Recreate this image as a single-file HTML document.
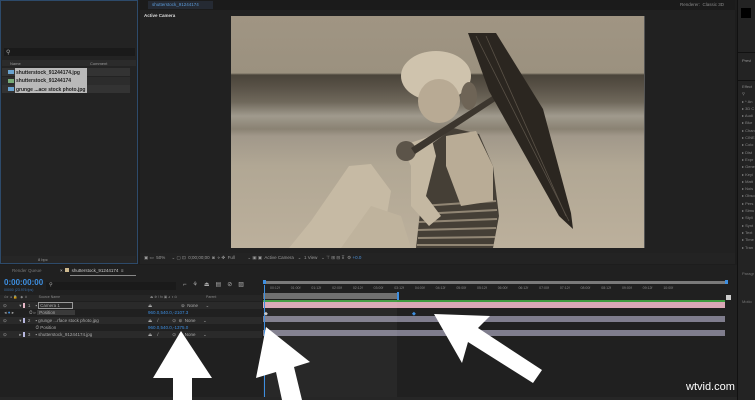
<!DOCTYPE html>
<html><head><meta charset="utf-8"><style>
*{margin:0;padding:0;box-sizing:border-box}
body{width:755px;height:400px;overflow:hidden;background:#1d1d1d;font-family:"Liberation Sans",sans-serif;font-size:5px;color:#9a9a9a;position:relative}
.a{position:absolute}
</style></head><body>
<!-- project panel -->
<div class="a" style="left:0;top:0;width:138px;height:264px;background:#232323;border:1px solid #2d4a6a"></div>
<div class="a" style="left:4px;top:48px;width:131px;height:8px;background:#1a1a1a"></div>
<div class="a" style="left:6px;top:49px;color:#aaa;font-size:6px">⚲</div>
<div class="a" style="left:2px;top:60px;width:134px;height:6px;background:#2b2b2b"></div>
<div class="a" style="left:10px;top:61px;font-size:4px">Name</div>
<div class="a" style="left:90px;top:61px;font-size:4px">Comment</div>
<div class="a" style="left:2px;top:68px;width:128px;height:8px;background:#333"></div>
<div class="a" style="left:2px;top:77px;width:128px;height:8px;background:#2c2c2c"></div>
<div class="a" style="left:2px;top:85px;width:128px;height:8px;background:#333"></div>
<div class="a" style="left:15px;top:68px;width:72px;height:25px;background:#b9b9b9"></div>
<div class="a" style="left:16px;top:69px;color:#222;font-size:5px;font-weight:bold;line-height:8.3px">shutterstock_91244174.jpg<br>shutterstock_91244174<br>grunge ...ace stock photo.jpg</div>
<div class="a" style="left:8px;top:70px;width:6px;height:4px;background:#6aa3d0"></div>
<div class="a" style="left:8px;top:79px;width:6px;height:4px;background:#7a7"></div>
<div class="a" style="left:8px;top:87px;width:6px;height:4px;background:#6aa3d0"></div>
<div class="a" style="left:2px;top:256px;width:134px;height:7px;background:#262626"></div>
<div class="a" style="left:38px;top:257px;font-size:4px">8 bpc</div>
<!-- comp panel -->
<div class="a" style="left:140px;top:0;width:595px;height:264px;background:#212121"></div>
<div class="a" style="left:140px;top:0;width:595px;height:10px;background:#1b1b1b"></div>
<div class="a" style="left:148px;top:1px;width:65px;height:8px;background:#252a33;color:#5b9ad8;font-size:4.5px;padding:1px 4px">shutterstock_91244174</div>
<div class="a" style="left:680px;top:2px;font-size:4.5px;color:#888">Renderer:&nbsp; Classic 3D</div>
<div class="a" style="left:144px;top:13px;font-size:4.5px;color:#ddd;font-weight:bold">Active Camera</div>
<!-- photo -->
<div class="a" style="left:231px;top:16px;width:413px;height:232px;overflow:hidden;background:linear-gradient(#a09583 0,#9b917f 57px,#4a443a 59px,#5a5348 72px,#6f685b 86px,#a09a8d 100px,#8a8273 113px,#a1988a 120px,#b1a794 150px,#bcb09c 232px)">
<svg width="413" height="232" style="position:absolute;left:0;top:0">
<!-- legs -->
<path d="M58 232 L80 205 L118 150 L140 148 L160 175 L150 232Z" fill="#c6baa4"/>
<path d="M110 232 L140 190 L170 200 L180 232Z" fill="#bfb39d"/>
<!-- swimsuit -->
<path d="M185 232 L192 170 L198 130 L222 112 L248 118 L262 150 L268 200 L262 232Z" fill="#453f36"/>
<g stroke="#a59884" stroke-width="2" opacity=".8">
<line x1="190" y1="190" x2="265" y2="185"/><line x1="189" y1="198" x2="266" y2="194"/><line x1="188" y1="206" x2="266" y2="203"/><line x1="187" y1="214" x2="265" y2="212"/><line x1="187" y1="222" x2="264" y2="221"/><line x1="186" y1="229" x2="263" y2="229"/>
</g>
<!-- torso/back skin -->
<path d="M215 120 L245 115 L262 150 L262 185 L230 190 L215 150Z" fill="#b9ac96"/>
<!-- arm -->
<path d="M170 130 L200 120 L205 140 L195 180 L210 200 L198 210 L180 190 L180 150Z" fill="#c4b8a2"/>
<circle cx="175" cy="135" r="10" fill="#5c5449"/>
<!-- umbrella handle -->
<path d="M180 132 L274 72 L278 76 L184 138Z" fill="#3c362e"/>
<!-- umbrella -->
<path d="M237 17 L265 17 L312 93 L340 197 L342 213 L328 200 L286 125 L258 75Z" fill="#2b2620"/>
<g stroke="#5a5247" stroke-width="0.8"><line x1="245" y1="20" x2="338" y2="205"/><line x1="255" y1="20" x2="335" y2="200"/></g>
<!-- head -->
<ellipse cx="205" cy="60" rx="35" ry="25" fill="#cfc3ad"/>
<ellipse cx="208" cy="85" rx="21" ry="22" fill="#b8aa94"/>
<ellipse cx="238" cy="80" rx="8" ry="14" fill="#6e6456"/>
</svg></div>
<div class="a" style="left:644px;top:16px;width:1px;height:232px;background:#555"></div>
<!-- comp toolbar -->
<div class="a" style="left:140px;top:253px;width:595px;height:11px;background:#232323"></div>
<div class="a" style="left:144px;top:255px;font-size:4.5px;color:#999;white-space:pre">▣ ▭  50%     ⌄ ▢ ⊡  0;00;00;00  ◙  ⋄ ✤  Full          ⌄ ▣ ▣  Active Camera   ⌄  1 View   ⌄ ⊤ ⊞ ⊟ ⊼  ⚙ <span style="color:#4a8fd8">+0.0</span></div>
<!-- right panel -->
<div class="a" style="left:737px;top:0;width:18px;height:400px;background:#232323;border-left:1px solid #111"></div>
<div class="a" style="left:741px;top:8px;width:10px;height:10px;background:#000"></div>
<div class="a" style="left:737px;top:52px;width:18px;height:1px;background:#111"></div>
<div class="a" style="left:742px;top:58px;font-size:4px">Previ</div>
<div class="a" style="left:737px;top:80px;width:18px;height:1px;background:#111"></div>
<div class="a" style="left:742px;top:83px;font-size:4px;line-height:7.3px;color:#888">Effect<br>⚲<br>▸ * An<br>▸ 3D C<br>▸ Audi<br>▸ Blur<br>▸ Chan<br>▸ CINE<br>▸ Colo<br>▸ Dist<br>▸ Expr<br>▸ Gene<br>▸ Keyi<br>▸ Matt<br>▸ Nois<br>▸ Obso<br>▸ Pers<br>▸ Simu<br>▸ Styli<br>▸ Synt<br>▸ Text<br>▸ Time<br>▸ Tran</div>
<div class="a" style="left:742px;top:270px;font-size:4px;line-height:7px;color:#777">Paragr<br><br><br><br>Motio</div>
<!-- timeline -->
<div class="a" style="left:0;top:265px;width:737px;height:135px;background:#202020"></div>
<div class="a" style="left:12px;top:268px;font-size:4.5px;color:#777">Render Queue</div>
<div class="a" style="left:60px;top:268px;font-size:4.5px;color:#ccc">×&nbsp; <span style="display:inline-block;width:4px;height:4px;background:#cdb98f"></span>&nbsp; shutterstock_91244174 &nbsp;≡</div>
<div class="a" style="left:70px;top:275px;width:66px;height:1px;background:#888"></div>
<div class="a" style="left:4px;top:278px;font-size:8px;color:#3d8ee0;font-weight:bold">0:00:00:00</div>
<div class="a" style="left:4px;top:288px;font-size:3.5px;color:#3b6ea8">00000 (23.976 fps)</div>
<div class="a" style="left:46px;top:282px;width:130px;height:8px;background:#1a1a1a;color:#aaa;font-size:5px;padding-left:3px">⚲</div>
<div class="a" style="left:183px;top:281px;font-size:6px;color:#aaa;letter-spacing:6px">⌐⚘⏏▤⊘▨</div>
<div class="a" style="left:0;top:295px;width:262px;height:6px;background:#262626;font-size:3.5px;padding-left:4px;color:#888">⊙◐ ● 🔒 &nbsp; ◆ &nbsp;# &nbsp;&nbsp;&nbsp;&nbsp;&nbsp;&nbsp;&nbsp;&nbsp;&nbsp;&nbsp; Source Name<span style="position:absolute;left:150px">⏏ ✲ \ fx ▣ ◕ ◑ ⊙</span><span style="position:absolute;left:206px">Parent</span></div>
<div class="a" style="left:0;top:302px;width:262px;height:7px;background:#2a2a2a"></div>
<div class="a" style="left:0;top:317px;width:262px;height:7px;background:#2a2a2a"></div>
<div class="a" style="left:0;top:331px;width:262px;height:7px;background:#2a2a2a"></div>
<div class="a" style="left:3px;top:302px;font-size:4.5px;line-height:7.3px;color:#aaa;white-space:pre">⊙          ▾ <span style="background:#e8b8c8">  </span>  1    ▪ <span style="border:1px solid #999;padding:0 12px 0 1px">Camera 1</span>
 ◂ <span style="color:#3d8ee0">●</span> ▸            ⏱ ▹ <span style="background:#3a3a3a;padding:0 20px 0 2px">Position</span>
⊙          ▾ <span style="background:#b8b8e0">  </span>  2    ▪ grunge ...rface stock photo.jpg
                          ⏱ Position
⊙          ▸ <span style="background:#b8b8e0">  </span>  3    ▪ shutterstock_91244174.jpg</div>
<div class="a" style="left:148px;top:302px;font-size:4.5px;line-height:7.3px;color:#aaa;white-space:pre">⏏                       ⊚  None      ⌄
<span style="color:#3d8ee0">960.0,540.0,-2107.3</span>
⏏    /           ⊙  ⊚  None      ⌄
<span style="color:#3d8ee0">960.0,540.0,-1375.0</span>
⏏    /           ⊙  ⊚  None      ⌄</div>
<!-- timeline graph -->
<div class="a" style="left:263px;top:281px;width:464px;height:3px;background:#7a7a7a"></div>
<div class="a" style="left:725px;top:280px;width:3px;height:4px;background:#3d8ee0"></div>
<div class="a" style="left:263px;top:280px;width:3px;height:4px;background:#3d8ee0"></div>
<div class="a" style="left:270px;top:286px;font-size:3.5px;color:#888;word-spacing:10px;white-space:nowrap">00:12f 01:00f 01:12f 02:00f 02:12f 03:00f 03:12f 04:00f 04:12f 05:00f 05:12f 06:00f 06:12f 07:00f 07:12f 08:00f 08:12f 09:00f 09:12f 10:00f</div>
<div class="a" style="left:263px;top:293px;width:134px;height:6px;background:#707070"></div>
<div class="a" style="left:397px;top:292px;width:2px;height:8px;background:#3d8ee0"></div>
<div class="a" style="left:263px;top:300px;width:462px;height:1.5px;background:#3e9a3e"></div>
<div class="a" style="left:263px;top:302px;width:462px;height:6px;background:#d9a7b6"></div>
<div class="a" style="left:263px;top:316px;width:462px;height:6px;background:#7f7d8d"></div>
<div class="a" style="left:263px;top:330px;width:462px;height:6px;background:#7f7d8d"></div>
<div class="a" style="left:263px;top:300px;width:134px;height:100px;background:rgba(255,255,255,.04)"></div>
<div class="a" style="left:264px;top:285px;width:1px;height:115px;background:#3d8ee0"></div>
<div class="a" style="left:412px;top:311px;font-size:5px;color:#3d8ee0">◆</div>
<div class="a" style="left:264px;top:311px;font-size:5px;color:#ccc">◆</div>
<div class="a" style="left:726px;top:295px;width:5px;height:5px;background:#ccc"></div>
<div class="a" style="left:0;top:397px;width:737px;height:3px;background:#262626"></div>
<!-- arrows -->
<svg class="a" style="left:0;top:0" width="755" height="400">
<polygon points="181,331 212,378 192,378 192,400 173,400 173,378 153,378" fill="#fff"/>
<polygon points="266,327 310,362 294,367 302,400 282,400 276,372 256,378" fill="#fff"/>
<polygon points="434,314 490,316 478,328 542,370 533,383 468,342 462,363" fill="#fff"/>
</svg>
<div class="a" style="left:686px;top:381px;font-size:11px;color:#fff">wtvid.com</div>
</body></html>
